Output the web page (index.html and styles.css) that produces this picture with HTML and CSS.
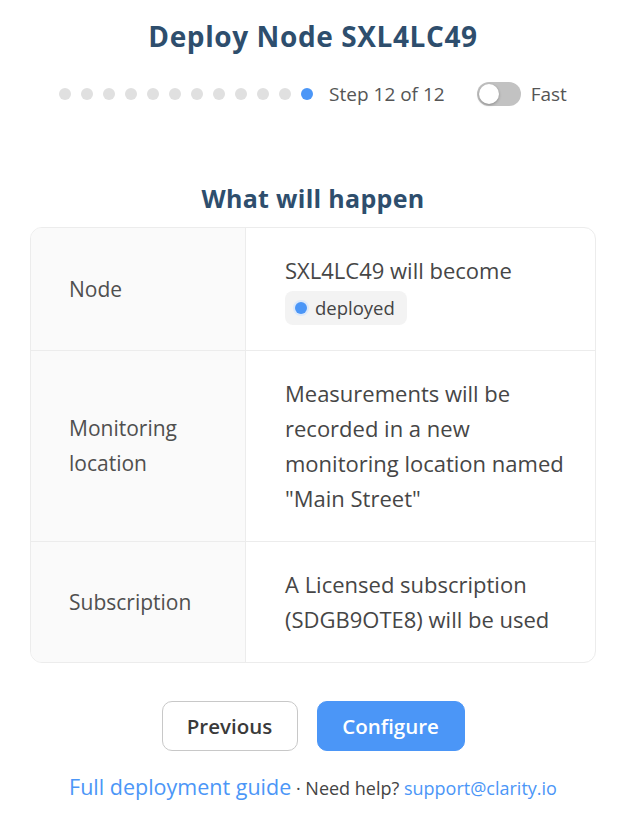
FILE: index.html
```html
<!DOCTYPE html>
<html lang="en">
<head>
<meta charset="utf-8">
<title>Deploy Node SXL4LC49</title>
<link rel="stylesheet" href="styles.css">
</head>
<body>
<main class="page">
  <h1 class="title">Deploy Node SXL4LC49</h1>
  <div class="progress">
    <div class="dots">
      <span class="dot"></span><span class="dot"></span><span class="dot"></span><span class="dot"></span>
      <span class="dot"></span><span class="dot"></span><span class="dot"></span><span class="dot"></span>
      <span class="dot"></span><span class="dot"></span><span class="dot"></span><span class="dot active"></span>
    </div>
    <span class="step">Step 12 of 12</span>
    <label class="fast">
      <span class="toggle"><span class="knob"></span></span>
      <span class="fast-label">Fast</span>
    </label>
  </div>

  <h2 class="subtitle">What will happen</h2>

  <div class="card">
    <div class="row">
      <div class="label">Node</div>
      <div class="value">
        <div>SXL4LC49 will become</div>
        <span class="badge"><span class="badge-dot"></span>deployed</span>
      </div>
    </div>
    <div class="row">
      <div class="label">Monitoring<br>location</div>
      <div class="value">Measurements will be recorded in a new monitoring location named "Main Street"</div>
    </div>
    <div class="row">
      <div class="label">Subscription</div>
      <div class="value">A Licensed subscription (SDGB9OTE8) will be used</div>
    </div>
  </div>

  <div class="actions">
    <button class="btn btn-secondary" type="button">Previous</button>
    <button class="btn btn-primary" type="button">Configure</button>
  </div>

  <p class="footer">
    <a class="guide" href="#">Full deployment guide</a><span class="help"> · Need help? </span><a class="mail" href="#">support@clarity.io</a>
  </p>
</main>
</body>
</html>
```
FILE: styles.css
```css
* { box-sizing: border-box; }

html, body {
  margin: 0;
  padding: 0;
  background: #ffffff;
}

body {
  font-family: "Open Sans", "Noto Sans", "Liberation Sans", sans-serif;
  color: #444444;
}

.page {
  width: 626px;
  padding: 18px 30px 0;
  display: flex;
  flex-direction: column;
  align-items: center;
}

.title {
  margin: 0;
  font-family: "Open Sans", "Inter", sans-serif;
  font-weight: 700;
  font-size: 28px;
  line-height: 36px;
  color: #2e4e6d;
  letter-spacing: 0.6px;
}

.progress {
  margin-top: 22px;
  height: 36px;
  display: flex;
  align-items: center;
}

.dots {
  display: flex;
  gap: 10px;
}

.dot {
  width: 12px;
  height: 12px;
  border-radius: 50%;
  background: #e0e0e0;
}

.dot.active { background: #4b96f7; }

.step {
  margin-left: 16px;
  font-size: 19px;
  color: #555555;
}

.fast {
  margin-left: 32px;
  display: flex;
  align-items: center;
  gap: 10px;
}

.toggle {
  width: 44px;
  height: 24px;
  border-radius: 12px;
  background: #c2c2c2;
  padding: 2px;
  display: flex;
}

.knob {
  width: 20px;
  height: 20px;
  border-radius: 50%;
  background: #ffffff;
  box-shadow: 0 1px 3px rgba(0,0,0,0.3);
}

.fast-label {
  font-size: 19px;
  color: #555555;
}

.subtitle {
  margin: 70px 0 0;
  font-family: "Open Sans", "Inter", sans-serif;
  font-weight: 700;
  font-size: 25px;
  line-height: 32px;
  color: #2e4e6d;
  letter-spacing: 0.3px;
}

.card {
  margin-top: 13px;
  width: 566px;
  border: 1px solid #ececec;
  border-radius: 12px;
  overflow: hidden;
}

.row {
  display: grid;
  grid-template-columns: 215px 1fr;
}

.row + .row { border-top: 1px solid #ececec; }

.label {
  background: #fafafa;
  border-right: 1px solid #ececec;
  padding: 0 20px 0 38px;
  display: flex;
  align-items: center;
  font-size: 21px;
  line-height: 35px;
  color: #4f4f4f;
}

.value {
  padding: 25px 30px 25px 39px;
  font-size: 22px;
  line-height: 35px;
  color: #464646;
}

.badge {
  margin-top: 2px;
  display: inline-flex;
  align-items: center;
  height: 34px;
  padding: 0 12px 0 10px;
  background: #f3f3f3;
  border-radius: 8px;
  font-size: 18.5px;
  line-height: 34px;
  color: #444444;
}

.badge-dot {
  width: 12px;
  height: 12px;
  border-radius: 50%;
  background: #4b96f7;
  box-shadow: 0 0 0 2px #dce9fb;
  margin-right: 8px;
}

.actions {
  margin-top: 38px;
  display: flex;
  gap: 19px;
}

.btn {
  height: 50px;
  border-radius: 10px;
  font-family: "Open Sans", "Noto Sans", sans-serif;
  font-weight: 600;
  font-size: 20.5px;
  cursor: pointer;
}

.btn-secondary {
  width: 136px;
  background: #ffffff;
  border: 1px solid #c8c8c8;
  color: #3a3a3a;
}

.btn-primary {
  width: 148px;
  background: #4b96f7;
  border: 1px solid #4b96f7;
  color: #ffffff;
}

.footer {
  margin: 22px 0 0;
  line-height: 28px;
  white-space: nowrap;
}

.guide {
  color: #4b96f7;
  text-decoration: none;
  font-size: 21.5px;
}

.help {
  color: #444444;
  font-size: 18px;
}

.mail {
  color: #4b96f7;
  text-decoration: none;
  font-size: 18px;
}
```
